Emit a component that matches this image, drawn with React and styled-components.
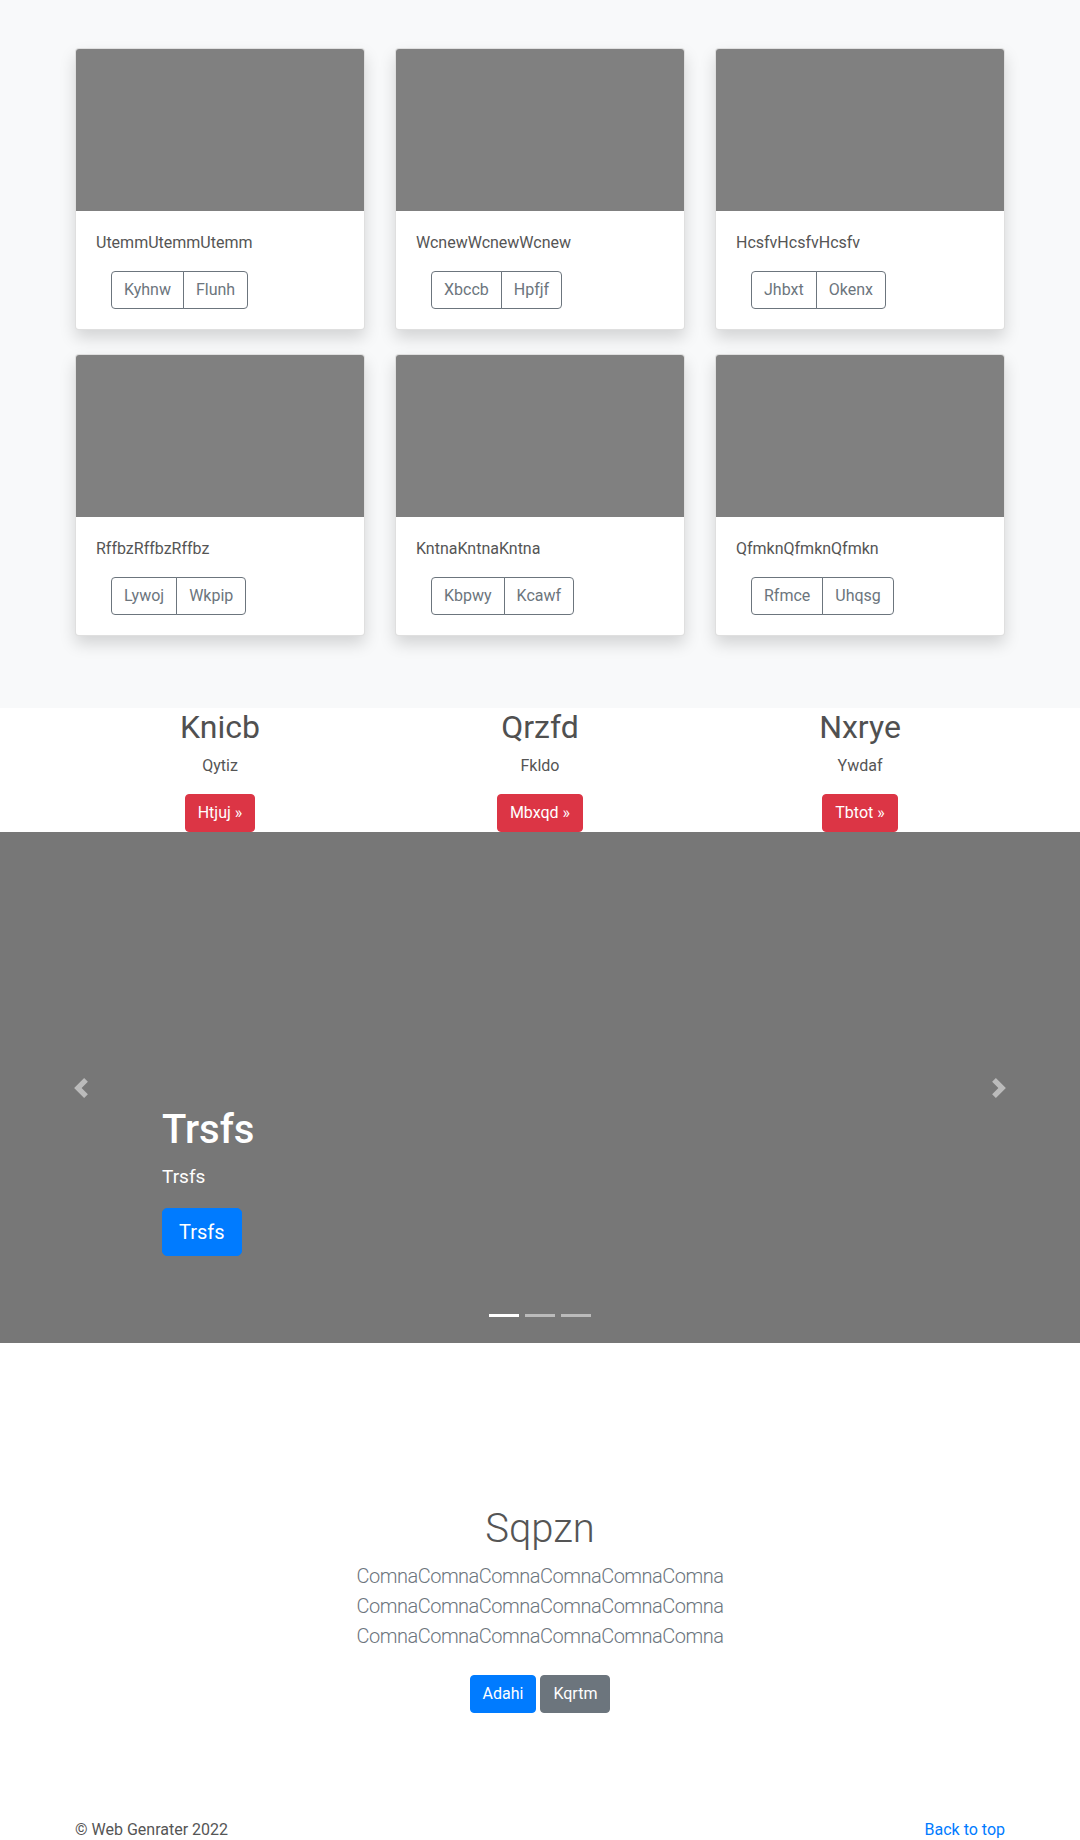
import React from 'react';
import styled, { createGlobalStyle } from 'styled-components';

const GlobalStyle = createGlobalStyle`
  body {
    margin: 0;
    font-family: Roboto, "Liberation Sans", sans-serif;
    font-size: 16px;
    line-height: 1.5;
    color: #555;
    background: #fff;
  }
  * { box-sizing: border-box; }
`;

const Container = styled.div`
  width: ${p => p.wide ? 960 : 930}px;
  margin: 0 auto;
`;

// album
const Album = styled.section`
  background: #f8f9fa;
  padding: 48px 0 72px;
`;

const CardGrid = styled.div`
  display: grid;
  grid-template-columns: repeat(3, 290px);
  column-gap: 30px;
  row-gap: 24px;
`;

const Card = styled.div`
  background: #fff;
  border: 1px solid rgba(0, 0, 0, .125);
  border-radius: 4px;
  box-shadow: 0 .5rem 1rem rgba(0, 0, 0, .15);
  overflow: hidden;
`;

const Thumb = styled.div`
  height: 162px;
  background: #808080;
`;

const CardBody = styled.div`
  padding: 20px;
`;

const CardText = styled.p`
  margin: 0 0 16px;
`;

const BtnGroup = styled.div`
  display: inline-flex;
  margin-left: 15px;
`;

const OutlineBtn = styled.button`
  font: inherit;
  line-height: 24px;
  padding: 6px 12px;
  color: #6c757d;
  background: transparent;
  border: 1px solid #6c757d;
  border-radius: 0;
  &:first-child { border-radius: 4px 0 0 4px; }
  &:last-child { border-radius: 0 4px 4px 0; margin-left: -1px; }
`;

// features
const Features = styled.div`
  display: grid;
  grid-template-columns: repeat(3, 1fr);
  text-align: center;
`;

const FeatureTitle = styled.h2`
  margin: 0 0 8px;
  font-size: 32px;
  font-weight: 400;
  line-height: 1.2;
  color: #505050;
`;

const FeatureText = styled.p`
  margin: 0 0 16px;
`;

const Btn = styled.a`
  display: inline-block;
  font-size: ${p => p.lg ? 20 : 16}px;
  line-height: ${p => p.lg ? 30 : 24}px;
  padding: ${p => p.lg ? '8px 16px' : '6px 12px'};
  border: 1px solid ${p => p.bg};
  border-radius: ${p => p.lg ? 5 : 4}px;
  background: ${p => p.bg};
  color: #fff;
  text-decoration: none;
`;

// carousel
const Carousel = styled.div`
  position: relative;
  height: 511px;
  background: #777;
`;

const Caption = styled.div`
  position: absolute;
  left: 15%;
  bottom: 87px;
  color: #fff;
  display: flex;
  flex-direction: column;
  align-items: flex-start;
`;

const CaptionTitle = styled.h1`
  margin: 0 0 8px;
  font-size: 40px;
  font-weight: 500;
  line-height: 48px;
`;

const CaptionText = styled.p`
  margin: 0 0 16px;
  font-size: 19px;
  line-height: 30px;
`;

const Control = styled.span`
  position: absolute;
  top: 0;
  bottom: 0;
  ${p => p.side}: 0;
  width: 15%;
  display: flex;
  align-items: center;
  justify-content: center;
  opacity: .5;
`;

const Indicators = styled.div`
  position: absolute;
  left: 0;
  right: 0;
  bottom: 26px;
  display: flex;
  justify-content: center;
  gap: 6px;
`;

const Indicator = styled.span`
  width: 30px;
  height: 3px;
  background: #fff;
  opacity: ${p => p.active ? 1 : .5};
`;

// jumbotron
const Jumbotron = styled.section`
  padding: 162px 0 49px;
  text-align: center;
`;

const JumboTitle = styled.h1`
  margin: 0 0 8px;
  font-size: 40px;
  font-weight: 300;
  line-height: 48px;
  color: #555;
`;

const Lead = styled.p`
  max-width: 450px;
  margin: 0 auto 16px;
  font-size: 20px;
  font-weight: 300;
  line-height: 30px;
  letter-spacing: -0.5px;
  color: #6c757d;
`;

const Actions = styled.div`
  display: flex;
  justify-content: center;
  gap: 4px;
  padding: 8px 0;
`;

// footer
const Footer = styled.footer`
  padding: 48px 0;
`;

const FooterRow = styled.div`
  display: flex;
  justify-content: space-between;
  a { color: #007bff; text-decoration: none; }
`;

const Chevron = ({ dir }) => (
  <svg width="20" height="20" viewBox="0 0 8 8" fill="#fff">
    {dir === 'prev'
      ? <path d="M5.25 0l-4 4 4 4 1.5-1.5L4.25 4l2.5-2.5L5.25 0z" />
      : <path d="M2.75 0l-1.5 1.5L3.75 4l-2.5 2.5L2.75 8l4-4-4-4z" />}
  </svg>
);

const cards = [
  { text: 'UtemmUtemmUtemm', btns: ['Kyhnw', 'Flunh'] },
  { text: 'WcnewWcnewWcnew', btns: ['Xbccb', 'Hpfjf'] },
  { text: 'HcsfvHcsfvHcsfv', btns: ['Jhbxt', 'Okenx'] },
  { text: 'RffbzRffbzRffbz', btns: ['Lywoj', 'Wkpip'] },
  { text: 'KntnaKntnaKntna', btns: ['Kbpwy', 'Kcawf'] },
  { text: 'QfmknQfmknQfmkn', btns: ['Rfmce', 'Uhqsg'] },
];

const features = [
  { title: 'Knicb', text: 'Qytiz', btn: 'Htjuj' },
  { title: 'Qrzfd', text: 'Fkldo', btn: 'Mbxqd' },
  { title: 'Nxrye', text: 'Ywdaf', btn: 'Tbtot' },
];

const comna = 'ComnaComnaComnaComnaComnaComna';

export default function App() {
  return (
    <>
      <GlobalStyle />
      <Album>
        <Container>
          <CardGrid>
            {cards.map(c => (
              <Card key={c.text}>
                <Thumb />
                <CardBody>
                  <CardText>{c.text}</CardText>
                  <BtnGroup>
                    {c.btns.map(b => <OutlineBtn key={b}>{b}</OutlineBtn>)}
                  </BtnGroup>
                </CardBody>
              </Card>
            ))}
          </CardGrid>
        </Container>
      </Album>

      <Container wide>
        <Features>
          {features.map(f => (
            <div key={f.title}>
              <FeatureTitle>{f.title}</FeatureTitle>
              <FeatureText>{f.text}</FeatureText>
              <Btn href="#" bg="#dc3545">{f.btn} »</Btn>
            </div>
          ))}
        </Features>
      </Container>

      <Carousel>
        <Caption>
          <CaptionTitle>Trsfs</CaptionTitle>
          <CaptionText>Trsfs</CaptionText>
          <Btn href="#" lg bg="#007bff">Trsfs</Btn>
        </Caption>
        <Control side="left"><Chevron dir="prev" /></Control>
        <Control side="right"><Chevron dir="next" /></Control>
        <Indicators>
          <Indicator active />
          <Indicator />
          <Indicator />
        </Indicators>
      </Carousel>

      <Jumbotron>
        <Container>
          <JumboTitle>Sqpzn</JumboTitle>
          <Lead>{comna} {comna} {comna}</Lead>
          <Actions>
            <Btn href="#" bg="#007bff">Adahi</Btn>
            <Btn href="#" bg="#6c757d">Kqrtm</Btn>
          </Actions>
        </Container>
      </Jumbotron>

      <Footer>
        <Container>
          <FooterRow>
            <span>© Web Genrater 2022</span>
            <a href="#">Back to top</a>
          </FooterRow>
        </Container>
      </Footer>
    </>
  );
}
